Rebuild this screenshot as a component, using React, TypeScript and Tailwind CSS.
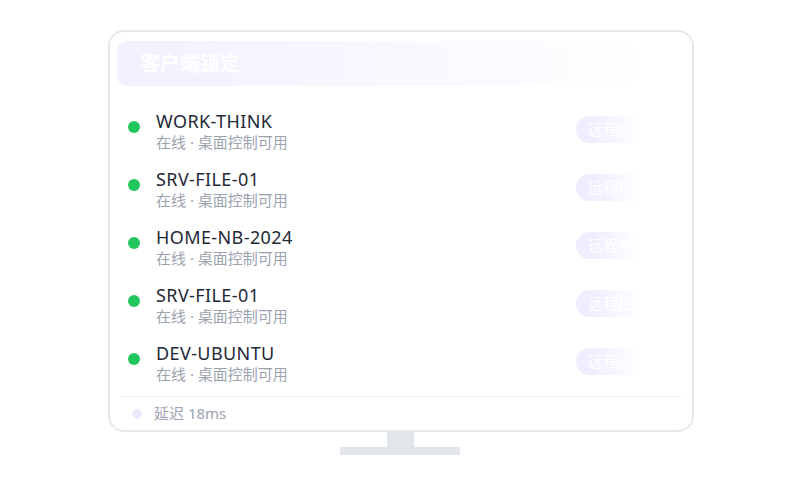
const hosts = ["WORK-THINK", "SRV-FILE-01", "HOME-NB-2024", "SRV-FILE-01", "DEV-UBUNTU"];

function HostRow({ name }: { name: string }) {
  return (
    <div className="flex h-[58px] items-center">
      <span className="mt-[-8px] h-[12px] w-[12px] shrink-0 rounded-full bg-[#22c55e]" />
      <div className="ml-[16px] flex flex-col">
        <span className="text-[18px] leading-[22px] tracking-[0.4px] text-[#1f2937]">{name}</span>
        <span className="text-[15px] leading-[20px] text-[#9ca3af]">在线 · 桌面控制可用</span>
      </div>
      <button
        type="button"
        className="ml-auto mt-[-4px] h-[27px] rounded-full bg-[#f1edff] px-[12px] text-[15px] leading-[27px] text-white"
      >
        远程控制
      </button>
    </div>
  );
}

export default function App() {
  return (
    <div
      className="flex h-[500px] w-[800px] flex-col bg-white pt-[30px] pl-[108px]"
      style={{ fontFamily: '"Noto Sans", "Noto Sans CJK SC", sans-serif' }}
    >
      {/* monitor frame */}
      <div className="relative flex h-[402px] w-[586px] flex-col overflow-hidden rounded-[16px] border-2 border-[#e5e7eb] bg-white px-[7px] pt-[9px]">
        <div className="flex h-[45px] shrink-0 items-center rounded-[10px] border-r border-[#eef0f3] bg-gradient-to-r from-[#f3f0ff] via-[#f9f8ff] to-white pl-[23px]">
          <span className="text-[20px] font-bold text-white">客户端锁定</span>
        </div>

        <div className="flex flex-col pt-[16px] pl-[11px] pr-[25px]">
          {hosts.map((h, i) => (
            <HostRow key={i} name={h} />
          ))}
        </div>

        <div className="mx-[3px] mt-[4px] border-t border-[#eef0f3]" />
        <div className="flex h-[33px] items-center pl-[15px]">
          <span className="h-[10px] w-[10px] rounded-full bg-[#ede9fe]" />
          <span className="ml-[12px] text-[15px] text-[#9ca3af]">延迟 18ms</span>
        </div>

        {/* right-edge fade over the screen content */}
        <div className="pointer-events-none absolute top-[9px] bottom-[40px] right-0 w-[100px] bg-gradient-to-r from-transparent via-white to-white" />
      </div>

      {/* stand */}
      <div className="ml-[279px] h-[15px] w-[27px] bg-[#e2e6ea]" />
      <div className="ml-[232px] h-[8px] w-[120px] bg-[#e2e6ea]" />
    </div>
  );
}
